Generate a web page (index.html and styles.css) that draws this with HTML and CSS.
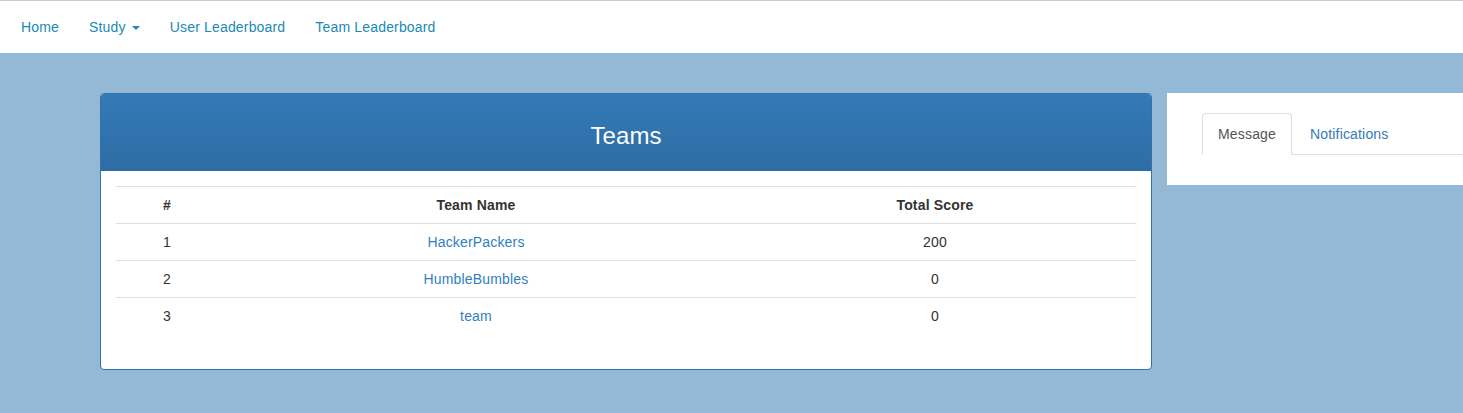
FILE: index.html
```html
<!DOCTYPE html>
<html>
<head>
<meta charset="utf-8">
<link rel="stylesheet" href="styles.css">
</head>
<body>
<nav class="navbar">
  <ul class="nav-links">
    <li><a href="#">Home</a></li>
    <li><a href="#">Study <span class="caret"></span></a></li>
    <li><a href="#">User Leaderboard</a></li>
    <li><a href="#">Team Leaderboard</a></li>
  </ul>
</nav>
<main class="content">
  <section class="panel">
    <div class="panel-heading">Teams</div>
    <div class="panel-body">
      <table class="table">
        <thead>
          <tr><th class="c1">#</th><th class="c2">Team Name</th><th class="c3">Total Score</th></tr>
        </thead>
        <tbody>
          <tr><td>1</td><td><a href="#">HackerPackers</a></td><td>200</td></tr>
          <tr><td>2</td><td><a href="#">HumbleBumbles</a></td><td>0</td></tr>
          <tr><td>3</td><td><a href="#">team</a></td><td>0</td></tr>
        </tbody>
      </table>
    </div>
  </section>
  <aside class="side">
    <ul class="tabs">
      <li class="tab active"><a href="#">Message</a></li>
      <li class="tab"><a href="#">Notifications</a></li>
    </ul>
  </aside>
</main>
</body>
</html>
```

FILE: styles.css
```css
* { box-sizing: border-box; }
html, body { margin: 0; padding: 0; }
body {
  background: #93b9d7;
  font-family: "Liberation Sans", Arial, Helvetica, sans-serif;
  font-size: 14px;
  line-height: 20px;
  letter-spacing: 0.17px;
  color: #333;
  height: 413px;
  overflow: hidden;
}
a { text-decoration: none; }

.navbar {
  background: #fff;
  border-top: 1px solid #c9c9c9;
  height: 53px;
  padding-left: 6px;
}
.nav-links {
  list-style: none;
  margin: 0;
  padding: 0;
  display: flex;
}
.nav-links a {
  display: block;
  padding: 16px 15px 15px;
  color: #1a8ab5;
  font-size: 14px;
  line-height: 20px;
}
.caret {
  display: inline-block;
  width: 0;
  height: 0;
  margin-left: 2px;
  vertical-align: middle;
  border-top: 4px solid #1a8ab5;
  border-left: 4px solid transparent;
  border-right: 4px solid transparent;
}

.content {
  display: flex;
  align-items: flex-start;
  padding: 40px 0 0 100px;
  gap: 15px;
}
.panel {
  flex: 0 0 1052px;
  background: #fff;
  border: 1px solid #3471a8;
  border-radius: 4px;
  overflow: hidden;
}
.panel-heading {
  height: 77px;
  background: linear-gradient(to bottom, #337ab7 0%, #2e6da4 100%);
  color: #fff;
  font-size: 24px;
  letter-spacing: 0.1px;
  display: flex;
  align-items: center;
  justify-content: center;
  padding-top: 7px;
}
.panel-body {
  padding: 15px 15px 0;
}
.table {
  width: 100%;
  border-collapse: collapse;
  margin-bottom: 35px;
}
.table th, .table td {
  padding: 8px;
  line-height: 20px;
  text-align: center;
  border-top: 1px solid #ddd;
}
.table th { font-weight: bold; color: #333; }
.table td a { color: #2f7fc0; }
.c1 { width: 102px; }
.c2 { width: 516px; }

.side {
  flex: 1 1 auto;
  background: #fff;
  padding: 20px 0 30px 35px;
  height: 92px;
}
.tabs {
  list-style: none;
  margin: 0;
  padding: 0;
  display: flex;
  border-bottom: 1px solid #ddd;
}
.tab { margin-bottom: -1px; margin-right: 2px; }
.tab a {
  display: block;
  padding: 10px 15px;
  line-height: 20px;
  border: 1px solid transparent;
  border-radius: 4px 4px 0 0;
  color: #337ab7;
}
.tab.active a {
  color: #555;
  background: #fff;
  border-color: #ddd #ddd transparent;
}
```
